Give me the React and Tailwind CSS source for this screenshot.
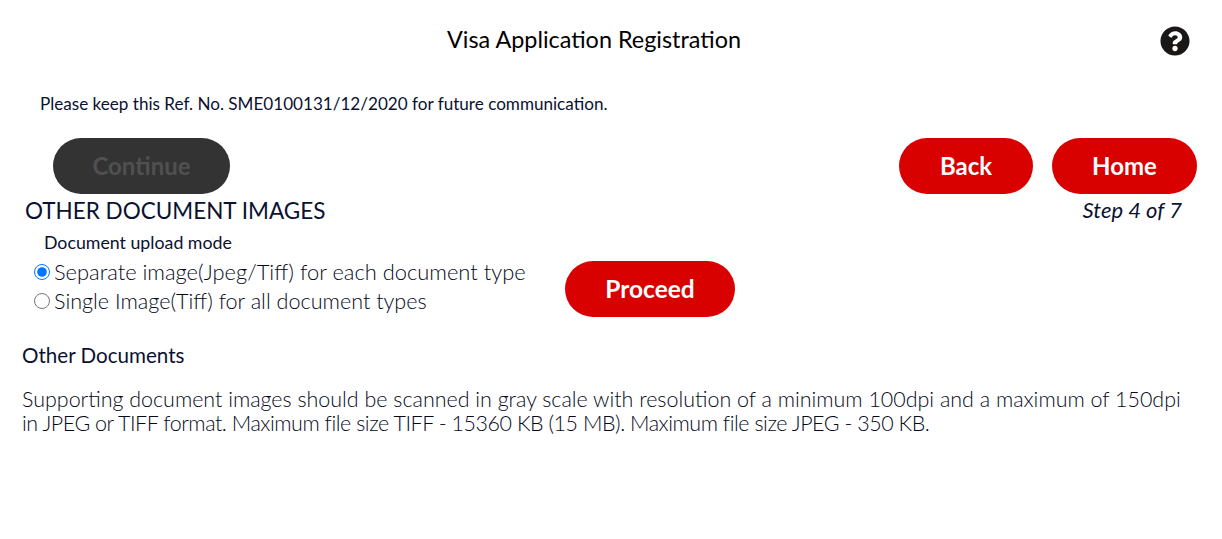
import React from "react";
import { FaQuestionCircle } from "react-icons/fa";

export default function App() {
  return (
    <div className="w-[1222px] h-[539px] bg-white overflow-hidden font-['Lato','Open_Sans',sans-serif] text-[#0b1130]">
      <div className="relative h-[80px] pt-[24px] text-center">
        <h1 className="text-[23.4px] leading-[30px] text-black pr-[34px]">Visa Application Registration</h1>
        <FaQuestionCircle className="absolute left-[1160px] top-[26px] text-[#1a1717]" size={30} />
      </div>
      <p className="pl-[40px] pt-[14px] text-[17.1px] leading-[20px]">Please keep this Ref. No. SME0100131/12/2020 for future communication.</p>
      <div className="flex mt-[24px] pl-[53px] pr-[25px]">
        <button className="w-[177px] h-[56px] rounded-[28px] bg-[#333333] text-[#505050] text-[24px] font-bold">Continue</button>
        <button className="ml-auto w-[134px] h-[56px] rounded-[28px] bg-[#d90000] text-white text-[24px] font-bold">Back</button>
        <button className="ml-[19px] w-[145px] h-[56px] rounded-[28px] bg-[#d90000] text-white text-[24px] font-bold">Home</button>
      </div>
      <div className="flex justify-between pl-[25px] pr-[40px]">
        <h2 className="mt-[1px] text-[22.5px] leading-[32px]">OTHER DOCUMENT IMAGES</h2>
        <span className="text-[22px] italic leading-[32px]">Step 4 of 7</span>
      </div>
      <div className="flex">
        <div className="pl-[34px] w-[565px]">
          <div className="pl-[10px] text-[17.75px] leading-[24px] mt-[3px]">Document upload mode</div>
          <label className="flex items-center h-[29px] mt-[3px] text-[21.9px] font-light text-[#050818]"><input type="radio" name="m" defaultChecked className="w-[16px] h-[16px] mr-[4px] accent-[#0075ff]" /><span className="mt-[2px]">Separate image(Jpeg/Tiff) for each document type</span></label>
          <label className="flex items-center h-[29px] text-[21.6px] font-light text-[#050818]"><input type="radio" name="m" className="w-[16px] h-[16px] mr-[4px]" /><span className="mt-[2px]">Single Image(Tiff) for all document types</span></label>
        </div>
        <button className="mt-[34px] w-[170px] h-[56px] rounded-[28px] bg-[#d90000] text-white text-[24.5px] font-bold">Proceed</button>
      </div>
      <h3 className="pl-[22px] mt-[25px] text-[20.6px] leading-[26px]">Other Documents</h3>
      <p className="pl-[22px] pr-[30px] mt-[19px] text-[21.45px] leading-[24px] font-light text-[#050818]">Supporting document images should be scanned in gray scale with resolution of a minimum 100dpi and a maximum of 150dpi<br /><span className="tracking-[-0.45px]">in JPEG or TIFF format. Maximum file size TIFF - 15360 KB (15 MB). Maximum file size JPEG - 350 KB.</span></p>
    </div>
  );
}
